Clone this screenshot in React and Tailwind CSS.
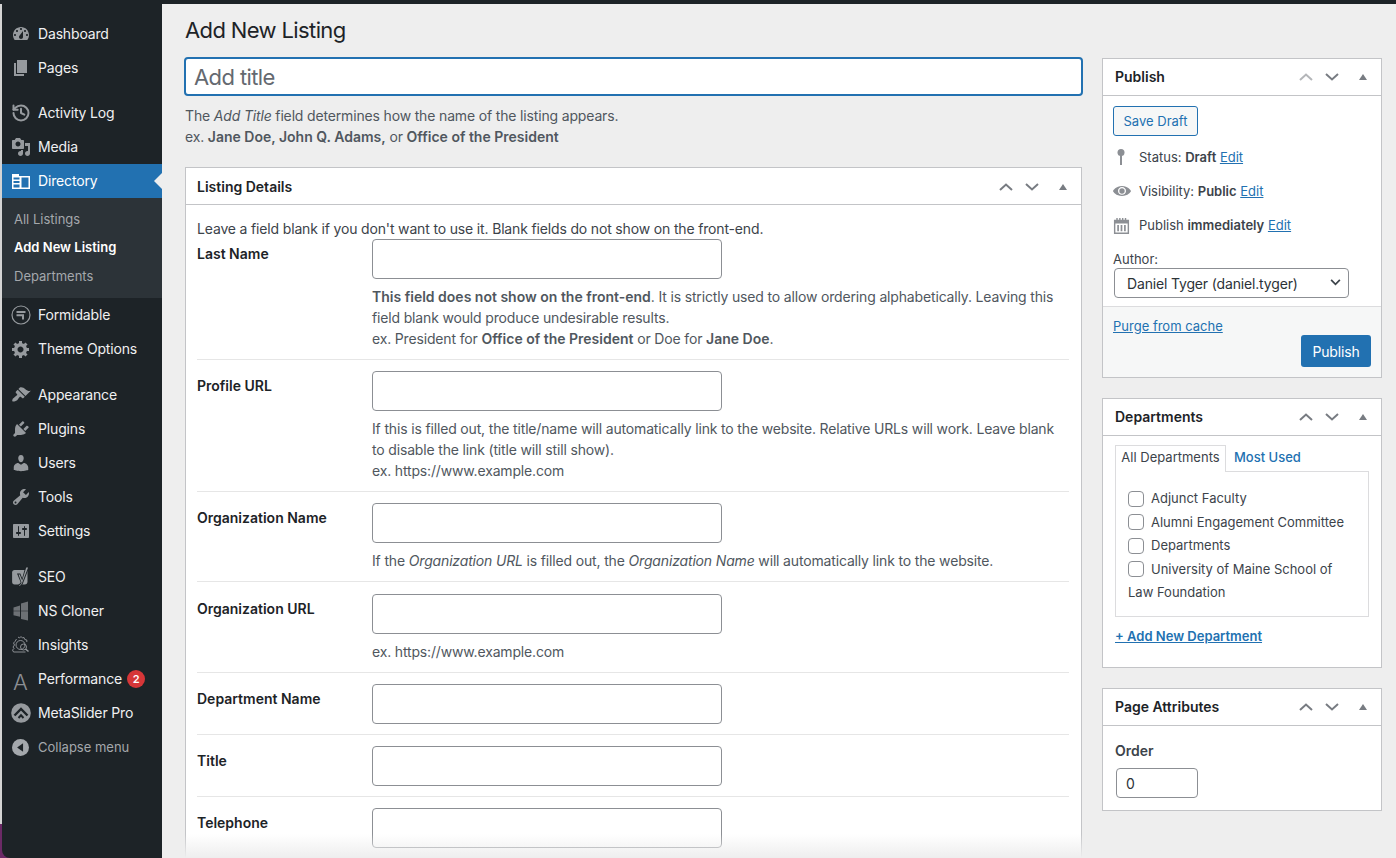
import { History } from 'lucide-react'

const Dash = ({ d }) => (
  <svg viewBox="0 0 20 20" className="w-5 h-5 fill-[#969a9e]">
    <path fillRule="evenodd" d={d} />
  </svg>
)

const B = ({ children }) => <b className="font-semibold tracking-normal">{children}</b>

const icons = {
  dashboard: <Dash d="M3.76 16h12.48c1.1-1.37 1.76-3.11 1.76-5 0-4.42-3.58-8-8-8s-8 3.58-8 8c0 1.89.66 3.63 1.76 5zM10 4c.55 0 1 .45 1 1s-.45 1-1 1-1-.45-1-1 .45-1 1-1zM6 6c.55 0 1 .45 1 1s-.45 1-1 1-1-.45-1-1 .45-1 1-1zm8 0c.55 0 1 .45 1 1s-.45 1-1 1-1-.45-1-1 .45-1 1-1zm-5.37 5.55L12 7v6c0 1.1-.9 2-2 2s-2-.9-2-2c0-.57.24-1.08.63-1.45zM4 10c.55 0 1 .45 1 1s-.45 1-1 1-1-.45-1-1 .45-1 1-1zm12 0c.55 0 1 .45 1 1s-.45 1-1 1-1-.45-1-1 .45-1 1-1z" />,
  pages: <Dash d="M6 15V2h10v13H6zm-1 1h8v2H3V5h2v11z" />,
  log: <History className="w-5 h-5 text-[#969a9e]" strokeWidth={2.4} />,
  media: <Dash d="M13 11V4c0-.55-.45-1-1-1h-1.67L9 1H5L3.67 3H2c-.55 0-1 .45-1 1v7c0 .55.45 1 1 1h10c.55 0 1-.45 1-1zM7 4.500c1.380 0 2.500 1.120 2.500 2.500S8.380 9.500 7 9.500 4.500 8.380 4.500 7 5.620 4.500 7 4.500zM14 6h5v10.500c0 1.380-1.120 2.500-2.500 2.500S14 17.880 14 16.500s1.120-2.500 2.500-2.500c.170 0 .340.020.500.050V9h-3V6zm-4 8.050V13h2v3.500c0 1.380-1.120 2.500-2.500 2.500S7 17.880 7 16.500 8.120 14 9.500 14c.170 0 .340.020.500.050z" />,
  directory: (
    <svg viewBox="0 0 18 15" className="w-[18px] h-[15px] fill-white">
      <path fillRule="evenodd" d="M0 0h7v2h11v13H0zM1.500 3.500v2h6v-2zM1.500 7v2h6V7zM1.500 10.500v3h6v-3zM9.500 3.500v10h7v-10z" />
    </svg>
  ),
  formidable: (
    <svg viewBox="0 0 20 20" className="w-5 h-5">
      <circle cx="10" cy="10" r="9" fill="none" stroke="#969a9e" strokeWidth="1.200" />
      <path d="M5.500 6h9v2h-9zM5.500 9.200h7.500v5.300h-2v-3.300h-5.500z" fill="#969a9e" />
    </svg>
  ),
  theme: <Dash d="M18 12h-2.180c-.170.700-.440 1.350-.810 1.930l1.540 1.540-2.100 2.100-1.540-1.540c-.580.360-1.230.630-1.910.790V19H8v-2.180c-.680-.160-1.330-.430-1.910-.790l-1.540 1.540-2.120-2.120 1.540-1.540c-.360-.580-.630-1.230-.790-1.910H1V9.030h2.170c.160-.700.440-1.350.800-1.940L2.430 5.550l2.100-2.100 1.540 1.540c.580-.370 1.240-.640 1.930-.810V2h3v2.180c.680.160 1.330.430 1.910.790l1.540-1.540 2.120 2.120-1.540 1.540c.360.590.640 1.240.800 1.940H18V12zm-8.500 1.500c1.660 0 3-1.340 3-3s-1.340-3-3-3-3 1.340-3 3 1.340 3 3 3z" />,
  appearance: <Dash d="M14.480 11.060L7.410 3.990l1.500-1.500c.500-.560 2.300-.470 3.510.320 1.210.800 1.430 1.280 2.910 2.100 1.180.640 2.450 1.260 4.450.850zm-.710.710L6.700 4.700 4.930 6.470c-.390.390-.390 1.020 0 1.410l1.060 1.060c.390.390.390 1.030 0 1.420-.600.600-1.430 1.110-2.210 1.690-.350.260-.700.530-1.010.840C1.430 13.230.910 15.800 1.400 16.290c.490.490 2.940.240 4.700-1.110.310-.310.580-.660.840-1.010.580-.780 1.090-1.610 1.690-2.210.390-.390 1.020-.390 1.410 0l1.060 1.060c.390.390 1.020.390 1.410 0z" />,
  plugins: <Dash d="M13.110 4.360L9.870 7.600 8 5.730l3.240-3.240c.350-.340 1.050-.200 1.560.320.520.510.660 1.210.310 1.550zm-8 1.770l.910-1.120 9.010 9.010-1.190.840c-.710.710-2.630 1.160-3.820 1.160H6.140L4.900 17.260c-.590.590-1.540.590-2.120 0-.590-.580-.590-1.530 0-2.120l1.240-1.240v-3.880c0-1.130.400-3.190 1.090-3.890zm7.260 3.970l3.240-3.240c.340-.350 1.040-.210 1.550.310.520.510.660 1.210.310 1.550l-3.240 3.250z" />,
  users: <Dash d="M10 9.250c-2.270 0-2.730-3.440-2.730-3.440C7 4.020 7.820 2 9.970 2c2.160 0 2.980 2.020 2.710 3.810 0 0-.410 3.440-2.680 3.440zm0 2.570L12.720 10c2.390 0 4.520 2.330 4.520 4.530v2.490s-3.650 1.130-7.240 1.130c-3.650 0-7.240-1.130-7.240-1.130v-2.490c0-2.250 1.940-4.480 4.470-4.480z" />,
  tools: <Dash d="M16.680 9.770c-1.340 1.340-3.300 1.670-4.950.990l-5.410 6.520c-.990.990-2.590.990-3.580 0s-.990-2.590 0-3.570l6.520-5.420c-.680-1.650-.350-3.610.990-4.950 1.280-1.280 3.120-1.620 4.720-1.060l-2.890 2.890 2.820 2.820 2.860-2.870c.530 1.580.180 3.390-1.080 4.650zM3.810 16.210c.400.390 1.040.390 1.430 0 .400-.400.400-1.040 0-1.430-.390-.400-1.030-.400-1.430 0-.390.390-.390 1.030 0 1.430z" />,
  settings: <Dash d="M18 16V4c0-.550-.450-1-1-1H3c-.550 0-1 .450-1 1v12c0 .550.450 1 1 1h14c.550 0 1-.450 1-1zM8 11h1c.550 0 1 .450 1 1s-.450 1-1 1H8v1.500c0 .280-.220.500-.500.500s-.500-.220-.500-.500V13H6c-.550 0-1-.450-1-1s.450-1 1-1h1V5.500c0-.280.220-.500.500-.500s.500.220.500.500V11zm5-2h-1c-.550 0-1-.450-1-1s.450-1 1-1h1V5.500c0-.280.220-.500.500-.500s.500.220.500.500V7h1c.550 0 1 .450 1 1s-.450 1-1 1h-1v5.500c0 .280-.220.500-.500.500s-.500-.220-.500-.500V9z" />,
  seo: (
    <svg viewBox="0 0 20 22" className="w-5 h-[22px]">
      <path d="M3.500 4h13v11.500c0 1.800-1 3-2.800 3H3.500c-1.400 0-2.400-1-2.400-2.400V6.400C1.100 5 2.100 4 3.500 4z" fill="#969a9e" />
      <path d="M14.500 0.500h4l-6.300 16.200c-.900 2.500-2.300 4-4.700 4.800v-3c1.200-.400 1.800-1.100 2.200-2.200L6 7.500h3.300l1.900 4.800z" fill="#1d2327" />
      <path d="M15.200 1.500h1.900l-5.800 15c-.700 1.900-1.700 3-3 3.700v-1c1.100-.500 1.700-1.300 2.200-2.700L7.500 8.500h1.300l2.400 6z" fill="#969a9e" />
    </svg>
  ),
  cloner: (
    <svg viewBox="0 0 20 20" className="w-5 h-5 fill-[#6d7175]">
      <path d="M2.500 6.500L9 4.500v5.200H2.500zM2.500 10.300H9v5.500l-6.500-1.500zM10 2.500l7-2v9.200h-7zM10 10.300h7v9.200l-7-1.500z" />
    </svg>
  ),
  insights: (
    <svg viewBox="0 0 20 20" className="w-5 h-5 fill-none stroke-[#969a9e]" strokeWidth="0.900">
      <path d="M7 2l1.500 1L10 1.500 11.500 3 13 2.500l.8 2 2 .5v2M5.500 4L4 6.500 2.500 8l1 2-1.500 2 1 1.500-1.500 1.500 1 2h12" />
      <circle cx="9.500" cy="10" r="4.500" />
      <circle cx="12.500" cy="12" r="3" />
      <path d="M14.500 14l3 2.500" strokeWidth="1.500" />
    </svg>
  ),
  performance: <span className="pt-[5px] text-[22px] leading-5 font-light tracking-normal text-[#8c8f94]">A</span>,
  metaslider: (
    <svg viewBox="0 0 20 20" className="w-5 h-5">
      <circle cx="10" cy="10" r="9.800" fill="#969a9e" />
      <path d="M3.500 12.500L10 6l6.500 6.500" fill="none" stroke="#1d2327" strokeWidth="2.400" />
      <path d="M7.500 15L10 12.300l2.500 2.700" fill="none" stroke="#1d2327" strokeWidth="2" />
    </svg>
  ),
}

const menuTop = [
  { name: 'Dashboard', icon: 'dashboard' },
  { name: 'Pages', icon: 'pages', gap: 'mb-[11px]' },
  { name: 'Activity Log', icon: 'log' },
  { name: 'Media', icon: 'media' },
]

const menuMid = [
  { name: 'Formidable', icon: 'formidable' },
  { name: 'Theme Options', icon: 'theme', gap: 'mb-3' },
  { name: 'Appearance', icon: 'appearance' },
  { name: 'Plugins', icon: 'plugins' },
  { name: 'Users', icon: 'users' },
  { name: 'Tools', icon: 'tools' },
  { name: 'Settings', icon: 'settings', gap: 'mb-3' },
  { name: 'SEO', icon: 'seo' },
  { name: 'NS Cloner', icon: 'cloner' },
  { name: 'Insights', icon: 'insights' },
  { name: 'Performance', icon: 'performance', badge: 2 },
  { name: 'MetaSlider Pro', icon: 'metaslider' },
]

function MenuItem({ item }) {
  return (
    <a className={`flex items-center h-[34px] text-[#f0f0f1] ${item.gap || ''}`}>
      <span className="w-9 flex justify-center pl-[1px]">{icons[item.icon]}</span>
      <span className="pb-[2px]">{item.name}</span>
      {item.badge && (
        <span className="ml-[5px] w-[18px] h-[18px] rounded-full bg-[#d63638] text-white text-[11px] font-semibold flex items-center justify-center">
          {item.badge}
        </span>
      )}
    </a>
  )
}

function Sidebar() {
  return (
    <aside className="w-[160px] bg-[#1d2327] rounded-bl-lg pt-[13px]">
      {menuTop.map((item) => (
        <MenuItem key={item.name} item={item} />
      ))}
      <a className="relative flex items-center h-[34px] bg-[#2271b1] text-white">
        <span className="w-9 flex justify-center pl-[1px]">{icons.directory}</span>
        <span className="pb-[2px]">Directory</span>
        <span className="absolute right-0 top-[9px] border-y-8 border-r-8 border-y-transparent border-r-[#eee]"></span>
      </a>
      <div className="h-[100px] bg-[#2c3338] pt-[7px] pl-3 text-[13px] tracking-normal">
        <div className="h-[28px] flex items-center text-[#a4a8ac]">All Listings</div>
        <div className="h-[29px] flex items-center text-white font-semibold">Add New Listing</div>
        <div className="h-[29px] flex items-center text-[#a4a8ac]">Departments</div>
      </div>
      {menuMid.map((item) => (
        <MenuItem key={item.name} item={item} />
      ))}
      <a className="flex items-center h-[34px] text-[13px] tracking-normal text-[#a4a8ac]">
        <span className="w-9 flex justify-center pl-[1px]">
          <svg viewBox="0 0 20 20" className="w-[17px] h-[17px]">
            <circle cx="10" cy="10" r="10" fill="#a4a8ac" />
            <path d="M13 5v10L6 10z" fill="#1d2327" />
          </svg>
        </span>
        <span>Collapse menu</span>
      </a>
    </aside>
  )
}

function Handles({ upDisabled }) {
  return (
    <div className="flex items-center">
      <svg viewBox="0 0 14 8" className={`w-[14px] h-2 fill-none stroke-2 ${upDisabled ? 'stroke-[#b4b6b9]' : 'stroke-[#787c82]'}`}>
        <path d="M1 7l6-5.500L13 7" />
      </svg>
      <svg viewBox="0 0 14 8" className="w-[14px] h-2 ml-3 fill-none stroke-2 stroke-[#787c82]">
        <path d="M1 1l6 5.500L13 1" />
      </svg>
      <span className="ml-5 border-x-4 border-b-[6px] border-x-transparent border-b-[#787c82]"></span>
    </div>
  )
}

function BoxHeader({ title, upDisabled, pad = 'h-[36px] pl-3' }) {
  return (
    <div className={`box-content border-b border-[#c3c4c7] flex items-center justify-between pr-[14px] ${pad}`}>
      <h2 className="font-semibold tracking-normal text-[#1d2327] pb-px">{title}</h2>
      <Handles upDisabled={upDisabled} />
    </div>
  )
}

function Field({ label, help, last, extra }) {
  return (
    <div className={`flex pb-[10px] ${last ? '' : 'border-b border-[#e6e6e6]'} ${extra ? 'mb-3' : 'mb-[11px]'}`}>
      <label className="w-[175px] shrink-0 pt-1 font-semibold tracking-normal text-[#1d2327]">{label}</label>
      <div className="flex-1">
        <input className="block w-[350px] h-10 bg-white border border-[#8c8f94] rounded-[4px]" />
        {help && <div className="mt-[7px] text-[#50575e]">{help}</div>}
      </div>
    </div>
  )
}

function ListingDetails() {
  return (
    <div className="bg-white border border-[#c3c4c7]">
      <BoxHeader title="Listing Details" pad="h-[35px] pt-px pl-[11px]" />
      <div className="pl-[11px] pr-3 pt-[14px]">
        <p className="text-[#3c434a] h-[20px] leading-[20px]">Leave a field blank if you don't want to use it. Blank fields do not show on the front-end.</p>
        <Field
          label="Last Name"
          help={
            <>
              <B>This field does not show on the front-end</B>. It is strictly used to allow ordering alphabetically. Leaving this field blank would produce undesirable results.
              <br />
              ex. President for <B>Office of the President</B> or Doe for <B>Jane Doe</B>.
            </>
          }
        />
        <Field
          label="Profile URL"
          help={
            <>
              If this is filled out, the title/name will automatically link to the website. Relative URLs will work. Leave blank to disable the link (title will still show).
              <br />
              ex. https://www.example.com
            </>
          }
        />
        <Field
          label="Organization Name"
          extra
          help={
            <>
              If the <i>Organization URL</i> is filled out, the <i>Organization Name</i> will automatically link to the website.
            </>
          }
        />
        <Field label="Organization URL" help="ex. https://www.example.com" />
        <Field label="Department Name" />
        <Field label="Title" />
        <Field label="Telephone" last />
      </div>
    </div>
  )
}

function PublishBox() {
  const editLink = <a className="text-[#2271b1] underline">Edit</a>
  return (
    <div className="bg-white border border-[#c3c4c7] h-[320px] flex flex-col text-[13px] tracking-normal">
      <div className="text-[14px]">
        <BoxHeader title="Publish" upDisabled />
      </div>
      <div className="px-[10px] pt-[10px] flex-1">
        <button className="h-[30px] w-[85px] border border-[#2271b1] rounded-[3px] bg-[#f6f7f7] text-[#2271b1]">Save Draft</button>
        <div className="mt-1 h-[34px] flex items-center">
          <span className="w-[26px] flex">
            <svg viewBox="0 0 20 20" className="w-5 h-5 -ml-[2px] fill-[#8c8f94]">
              <circle cx="10" cy="5.500" r="3.500" />
              <path d="M9 8h2v10H9z" />
            </svg>
          </span>
          <span>Status: <B>Draft</B> {editLink}</span>
        </div>
        <div className="h-[34px] flex items-center">
          <span className="w-[26px] flex">
            <svg viewBox="0 0 20 20" className="w-[18px] h-[18px] fill-[#8c8f94]">
              <path fillRule="evenodd" d="M10 4.400C3.439 4.400 0 9.232 0 10c0 .766 3.439 5.600 10 5.600s10-4.834 10-5.600c0-.768-3.440-5.600-10-5.600zm0 9.900c-2.455 0-4.445-1.928-4.445-4.307S7.545 5.691 10 5.691s4.444 1.929 4.444 4.309-1.989 4.300-4.444 4.300z" />
              <circle cx="10" cy="10" r="3" />
            </svg>
          </span>
          <span>Visibility: <B>Public</B> {editLink}</span>
        </div>
        <div className="h-[34px] flex items-center">
          <span className="w-[26px] flex">
            <svg viewBox="0 0 18 18" className="w-[17px] h-[17px] fill-[#8c8f94]">
              <path fillRule="evenodd" d="M1 3h2.500V1h1.500v2h1.500V1h1.500v2h1.500V1h1.500v2h1.500V1h1.500v2H17v15H1zM2.500 7v9.500h13V7zM4.500 8.500h1.800v6.500H4.500zM8.100 8.500h1.800v6.500H8.100zM11.700 8.500h1.800v6.500h-1.800z" />
            </svg>
          </span>
          <span>Publish <B>immediately</B> {editLink}</span>
        </div>
        <div className="mt-[7px] leading-[20px]">Author:</div>
        <div className="relative w-[235px] ml-[1px] -mt-px">
          <select className="appearance-none block w-full h-[30px] pl-3 bg-white border border-[#8c8f94] rounded-[4px] text-[14px] tracking-[-0.16px] text-[#2c3338]">
            <option>Daniel Tyger (daniel.tyger)</option>
          </select>
          <svg viewBox="0 0 12 8" className="absolute right-[8px] top-[11px] w-[11px] h-[7px] fill-none stroke-2 stroke-[#3c434a]">
            <path d="M1 1l5 5 5-5" />
          </svg>
        </div>
      </div>
      <div className="h-[71px] border-t border-[#dcdcde] bg-[#f6f7f7] px-[10px] pt-[9px] relative">
        <a className="text-[#2271b1] underline leading-[20px] block">Purge from cache</a>
        <button className="absolute right-[10px] top-[28px] w-[70px] h-8 bg-[#2271b1] rounded-[3px] text-white text-[14px] tracking-[-0.16px]">Publish</button>
      </div>
    </div>
  )
}

const departments = ['Adjunct Faculty', 'Alumni Engagement Committee', 'Departments']

function DepartmentsBox() {
  return (
    <div className="bg-white border border-[#c3c4c7] h-[270px] mt-5">
      <BoxHeader title="Departments" />
      <div className="px-3 pt-[9px] text-[13px] tracking-normal">
        <div className="flex h-[27px]">
          <div className="w-[111px] h-[27px] pb-1 border border-b-0 border-[#dcdcde] bg-white flex items-center justify-center relative z-10">All Departments</div>
          <a className="ml-[8px] pb-[2px] flex items-center text-[#2271b1] font-medium">Most Used</a>
        </div>
        <div className="-mt-[1px] h-[146px] border border-[#dcdcde] pl-3 pr-5 pt-[15px] leading-[23.500px]">
          {departments.map((d) => (
            <label key={d} className="flex items-center h-[23.500px]">
              <input type="checkbox" className="appearance-none w-4 h-4 mr-[7px] border border-[#8c8f94] rounded-[4px] bg-white" />
              {d}
            </label>
          ))}
          <label className="block">
            <input type="checkbox" className="appearance-none w-4 h-4 mr-[7px] border border-[#8c8f94] rounded-[4px] bg-white align-[-3px]" />
            University of Maine School of Law Foundation
          </label>
        </div>
        <a className="block mt-[9px] leading-[20px] text-[#2271b1] underline font-semibold">+ Add New Department</a>
      </div>
    </div>
  )
}

function AttributesBox() {
  return (
    <div className="bg-white border border-[#c3c4c7] h-[123px] mt-5">
      <BoxHeader title="Page Attributes" />
      <div className="px-3 pt-[15px]">
        <div className="font-semibold tracking-normal leading-[20px] text-[#3c434a]">Order</div>
        <input defaultValue="0" className="block mt-[7px] ml-[1px] w-[82px] h-[30px] px-[9px] border border-[#8c8f94] rounded-[4px] text-[#2c3338]" />
      </div>
    </div>
  )
}

export default function App() {
  return (
    <div className="relative w-[1396px] h-[858px] overflow-hidden flex flex-col bg-[#eeeeee] font-['Inter',sans-serif] text-[14px] leading-[21px] tracking-[-0.16px] text-[#3c434a]">
      <div className="h-1 bg-[#1d2327] shrink-0"></div>
      <div className="flex flex-1 min-h-0">
        <div className="w-[2px] bg-[#d4d4d4] relative">
          <div className="absolute left-0 top-[820px] w-[10px] h-[34px] bg-[#6b2a66]"></div>
        </div>
        <div className="relative flex">
          <Sidebar />
        </div>
        <main className="flex-1 min-w-0 pl-[23px] pr-[14px] flex gap-5">
          <div className="w-[897px] shrink-0">
            <h1 className="pt-[11px] pb-[12px] text-[22px] leading-[30px] tracking-[-0.62px] text-[#1d2327]">Add New Listing</h1>
            <input placeholder="Add title" className="block w-[899px] -ml-px h-[39px] px-2 bg-white border-2 border-[#2271b1] rounded-[4px] text-[22px] tracking-[-0.6px] placeholder:text-[#646970] outline-none" />
            <div className="mt-[9px] mb-5 text-[#50575e]">
              The <i>Add Title</i> field determines how the name of the listing appears.
              <br />
              ex. <B>Jane Doe, John Q. Adams,</B> or <B>Office of the President</B>
            </div>
            <ListingDetails />
          </div>
          <div className="w-[280px] shrink-0 pt-[54px]">
            <PublishBox />
            <DepartmentsBox />
            <AttributesBox />
          </div>
        </main>
      </div>
      <div className="absolute left-[162px] right-0 bottom-0 h-[24px] bg-gradient-to-b from-transparent to-[#eeeeee] pointer-events-none"></div>
    </div>
  )
}
